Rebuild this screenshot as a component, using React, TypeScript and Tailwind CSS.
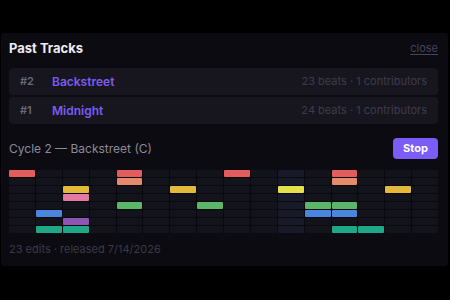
const tracks = [
  { n: 2, name: "Backstreet", beats: 23, contributors: 1 },
  { n: 1, name: "Midnight", beats: 24, contributors: 1 },
];

// [row, col, colour]
const notes: [number, number, string][] = [
  [0, 0, "bg-[#e35d5d]"],
  [0, 4, "bg-[#e35d5d]"],
  [0, 8, "bg-[#e35d5d]"],
  [0, 12, "bg-[#e35d5d]"],
  [1, 4, "bg-[#e58b6c]"],
  [1, 12, "bg-[#e58b6c]"],
  [2, 2, "bg-[#e3b93c]"],
  [2, 6, "bg-[#e3b93c]"],
  [2, 10, "bg-[#e6e04a]"],
  [2, 14, "bg-[#e3b93c]"],
  [3, 2, "bg-[#e57aa0]"],
  [4, 4, "bg-[#5cb66a]"],
  [4, 7, "bg-[#5cb66a]"],
  [4, 11, "bg-[#5cb66a]"],
  [4, 12, "bg-[#5cb66a]"],
  [5, 1, "bg-[#4a86e0]"],
  [5, 11, "bg-[#4a86e0]"],
  [5, 12, "bg-[#4a86e0]"],
  [6, 2, "bg-[#8e55b5]"],
  [7, 1, "bg-[#1fa888]"],
  [7, 2, "bg-[#1fa888]"],
  [7, 12, "bg-[#1fa888]"],
  [7, 13, "bg-[#1fa888]"],
];

const ROWS = 8;
const COLS = 16;
const PLAYHEAD = 10;

function cellClass(r: number, c: number) {
  const hit = notes.find(([nr, nc]) => nr === r && nc === c);
  if (hit) return hit[2];
  return c === PLAYHEAD ? "bg-[#181a2a]" : "bg-[#13131c]";
}

export default function App() {
  const cells = [];
  for (let r = 0; r < ROWS; r++) {
    for (let c = 0; c < COLS; c++) {
      cells.push(<div key={`${r}-${c}`} className={`h-[7px] rounded-[1px] ${cellClass(r, c)}`} />);
    }
  }

  return (
    <div className="h-[300px] w-[450px] bg-black pt-[33px] pl-px font-['Inter','Noto_Sans',sans-serif]">
      <div className="h-[233px] w-[447px] rounded-[3px] bg-[#0c0b11] pl-2 pr-[10px] pt-[5px]">
        <div className="flex items-center justify-between">
          <h2 className="text-[13px] font-bold leading-[20px] text-[#ececf2]">Past Tracks</h2>
          <button className="text-[11px] leading-[20px] text-[#45445a] underline underline-offset-2">close</button>
        </div>

        <ul className="mt-[10px] space-y-[2px]">
          {tracks.map((t) => (
            <li key={t.n} className="flex h-[27px] items-center rounded-[4px] bg-[#17161f] pl-[11px] pr-[11px]">
              <span className="w-[32px] text-[11px] font-semibold text-[#6a6a78]">#{t.n}</span>
              <span className="text-[12px] font-semibold text-[#7a5cf2]">{t.name}</span>
              <span className="ml-auto text-[11px] text-[#3d3c4b]">
                {t.beats} beats · {t.contributors} contributors
              </span>
            </li>
          ))}
        </ul>

        <div className="mt-[14px] flex items-center justify-between">
          <p className="text-[12px] text-[#8a8a9a]">Cycle 2 — Backstreet (C)</p>
          <button className="h-[21px] w-[45px] rounded-[4px] bg-[#7b5cf6] text-[11px] font-bold text-white">Stop</button>
        </div>

        <div className="mt-[11px] grid grid-cols-16 gap-x-px gap-y-px bg-[#0a0a0e]">{cells}</div>

        <p className="mt-[8px] text-[11px] text-[#3a3a48]">23 edits · released 7/14/2026</p>
      </div>
    </div>
  );
}
